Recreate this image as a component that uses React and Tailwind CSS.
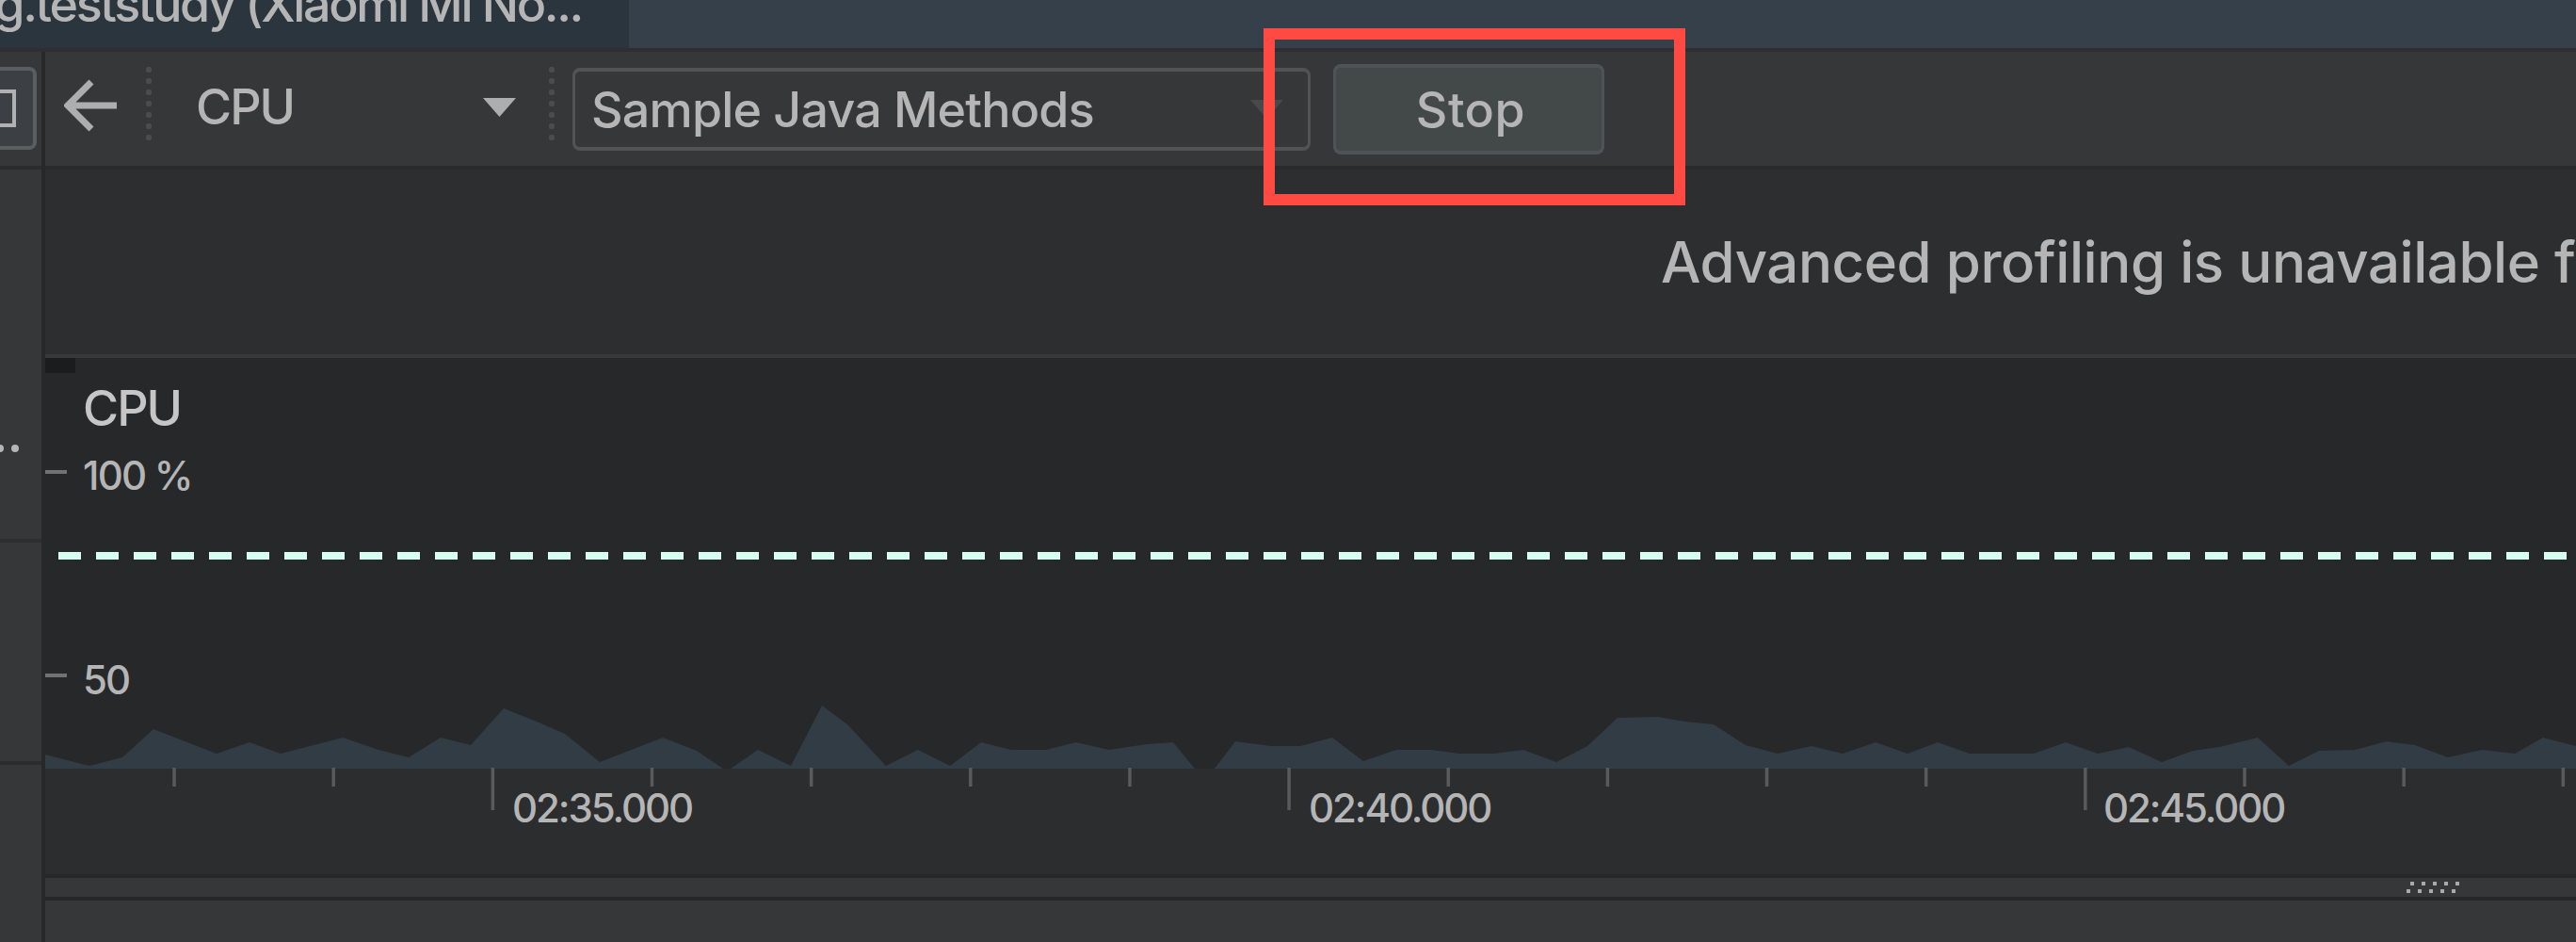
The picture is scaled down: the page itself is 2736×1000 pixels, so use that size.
const samples = [
  [48, 801], [95, 813], [130, 804], [163, 774], [230, 800], [265, 788], [298, 800],
  [364, 783], [402, 796], [434, 804], [468, 783], [500, 791], [535, 752], [570, 766],
  [600, 779], [637, 809], [704, 783], [740, 797], [768, 816], [776, 816], [805, 796],
  [840, 813], [873, 749], [900, 769], [941, 813], [975, 796], [1009, 813], [1042, 788],
  [1074, 796], [1111, 796], [1143, 788], [1178, 796], [1218, 790], [1246, 788], [1269, 816],
  [1290, 816], [1312, 787], [1350, 792], [1381, 792], [1415, 783], [1448, 808], [1483, 796],
  [1520, 796], [1550, 800], [1586, 800], [1618, 796], [1653, 809], [1686, 792], [1718, 762],
  [1761, 761], [1790, 766], [1820, 769], [1854, 791], [1888, 800], [1924, 792], [1957, 800],
  [1992, 788], [2026, 800], [2058, 788], [2092, 800], [2160, 800], [2194, 788], [2228, 800],
  [2261, 793], [2296, 809], [2329, 797], [2357, 793], [2398, 783], [2431, 813], [2463, 797],
  [2501, 796], [2535, 787], [2565, 791], [2600, 804], [2636, 796], [2671, 800], [2701, 783],
  [2736, 792],
];

const ticks = Array.from({ length: 16 }, (_, i) => 185.3 + i * 169.15);

const timeLabels = [
  { text: "02:35.000", left: "left-[496px]" },
  { text: "02:40.000", left: "left-[1342px]" },
  { text: "02:45.000", left: "left-[2186px]" },
];

const DotSeparator = () => (
  <div className="flex flex-col gap-1.5 w-1.5">
    {[0, 1, 2, 3, 4, 5, 6].map((i) => (
      <span key={i} className="w-1.5 h-1.5 rounded-[2px] bg-[#4b4c4e]" />
    ))}
  </div>
);

const Caret = ({ className }) => (
  <svg width="35" height="20" viewBox="0 0 35 20" className={className}>
    <path d="M0 0H35L17.5 20Z" fill="currentColor" />
  </svg>
);

const TabBar = () => (
  <div className="h-[55px] shrink-0 flex bg-[#36404b] border-b-4 border-[#2f2f31]">
    <div className="w-[668px] bg-[#2a353d] flex justify-end overflow-hidden">
      <span className="mr-[50px] -mt-[21px] text-[52px] leading-none tracking-[-2.35px] whitespace-nowrap">
        g.teststudy (Xiaomi Mi No...
      </span>
    </div>
  </div>
);

const LeftRail = () => (
  <aside className="w-12 shrink-0 flex flex-col border-r-4 border-[#27282a]">
    <div className="h-[125px] shrink-0 pt-4 border-b-4 border-[#2b2c2d] overflow-hidden">
      <div className="w-[39px] h-[88px] rounded-r-lg border-4 border-l-0 border-[#5a5e61] bg-[#3c3f43] flex items-center">
        <span className="w-[17px] h-10 border-4 border-l-0 border-[#b0b1b2]" />
      </div>
    </div>
    <div className="h-[396px] shrink-0 border-b-4 border-[#2d2e2f] pt-[292px]">
      <div className="flex gap-2 -ml-1">
        <span className="w-2 h-2 rounded-full bg-[#b5b5b5]" />
        <span className="w-2 h-2 rounded-full bg-[#b5b5b5]" />
      </div>
    </div>
    <div className="h-[236px] shrink-0 border-b-4 border-[#2b2c2d]" />
  </aside>
);

const Toolbar = () => (
  <div className="relative h-[125px] shrink-0 flex items-center border-b-4 border-[#2a2b2c]">
    <svg width="56" height="56" viewBox="0 0 56 56" fill="none" className="ml-5 -mt-2">
      <path d="M56 28H5M29 3L4 28L29 53" stroke="#adaeaf" strokeWidth="7" />
    </svg>
    <div className="ml-[31px] -mt-3">
      <DotSeparator />
    </div>
    <div className="ml-[47px] -mt-1 w-[340px] flex items-center justify-between">
      <span className="text-[52px] leading-none tracking-[-2px]">CPU</span>
      <Caret className="text-[#adaeaf]" />
    </div>
    <div className="ml-[35px] -mt-3">
      <DotSeparator />
    </div>
    <div className="ml-[19px] w-[784px] h-[88px] pl-[17px] pr-[26px] flex items-center justify-between rounded-lg border-x-[3px] border-y-4 border-[#525354]">
      <span className="pt-[3px] text-[52px] leading-none tracking-[-0.8px] whitespace-nowrap">
        Sample Java Methods
      </span>
      <Caret className="text-[#48494b]" />
    </div>
    <button className="ml-6 w-72 h-24 pt-[3px] pl-1 rounded-lg border-x-[3px] border-y-4 border-[#505355] bg-[#434848] text-[52px] leading-none tracking-[0.5px]">
      Stop
    </button>
    {/* highlight frame around the stop button */}
    <div className="absolute z-10 left-[1294px] -top-[25px] w-[448px] h-[188px] border-12 border-[#ff4a44]" />
  </div>
);

const Plot = () => (
  <section className="relative h-[436px] shrink-0 bg-[#27282a]">
    <svg width="2688" height="436" viewBox="48 380 2688 436" className="absolute inset-0">
      <rect x="48" y="380" width="32" height="16" fill="#1b1c1d" />
      <polygon
        points={`48,816 ${samples.map((p) => p.join(",")).join(" ")} 2736,816`}
        fill="#323c44"
      />
      <path d="M48 501H71M48 717H71" stroke="#717273" strokeWidth="4" />
      <path d="M62 590H2736" stroke="#d6fff1" strokeWidth="8" strokeDasharray="24 16" />
    </svg>
    <div className="relative pl-10 pt-[28px] flex flex-col">
      <span className="text-[52px] leading-none tracking-[-2px] text-[#c6c6c7]">CPU</span>
      <span className="mt-[24px] text-[42px] leading-none tracking-[-1.8px]">100 %</span>
      <span className="mt-[175px] text-[42px] leading-none tracking-[-2px]">50</span>
    </div>
  </section>
);

const TimeAxis = () => (
  <section className="relative h-[116px] shrink-0 bg-[#2c2d2f] border-b-4 border-[#262728]">
    <svg width="2688" height="46" viewBox="48 815 2688 46" className="absolute left-0 -top-px">
      {ticks.map((x, i) => (
        <rect
          key={x}
          x={x - 2}
          y="815"
          width="3.5"
          height={i % 5 === 2 ? 45 : 20}
          fill="#595a5b"
        />
      ))}
    </svg>
    {timeLabels.map((label) => (
      <span
        key={label.text}
        className={`absolute top-[21px] text-[42px] leading-none tracking-[-2.1px] ${label.left}`}
      >
        {label.text}
      </span>
    ))}
  </section>
);

const Splitter = () => (
  <div className="h-6 shrink-0 flex justify-end border-b-4 border-[#252627]">
    <svg width="60" height="20" viewBox="0 0 60 20" className="mr-[122px]" fill="#a9aaab">
      {[0, 1, 2, 3, 4].map((i) => (
        <g key={i}>
          <rect x={6 + i * 12} y="4" width="4" height="4" />
          <rect x={2 + i * 12} y="12" width="4" height="4" />
        </g>
      ))}
    </svg>
  </div>
);

const App = () => {
  return (
    <div className="w-[2736px] h-[1000px] flex flex-col overflow-hidden bg-[#363739] text-[#b5b5b6] font-medium font-['Inter',sans-serif]">
      <TabBar />
      <div className="flex-1 min-h-0 flex">
        <LeftRail />
        <main className="flex-1 min-w-0 flex flex-col">
          <Toolbar />
          <div className="h-[200px] shrink-0 bg-[#2d2e30] border-b-4 border-[#38393b] pl-[1716px] pt-[68px] overflow-hidden">
            <p className="text-[60px] leading-none tracking-[-0.45px] whitespace-nowrap">
              Advanced profiling is unavailable fo
            </p>
          </div>
          <Plot />
          <TimeAxis />
          <Splitter />
        </main>
      </div>
    </div>
  );
};

export default App;
